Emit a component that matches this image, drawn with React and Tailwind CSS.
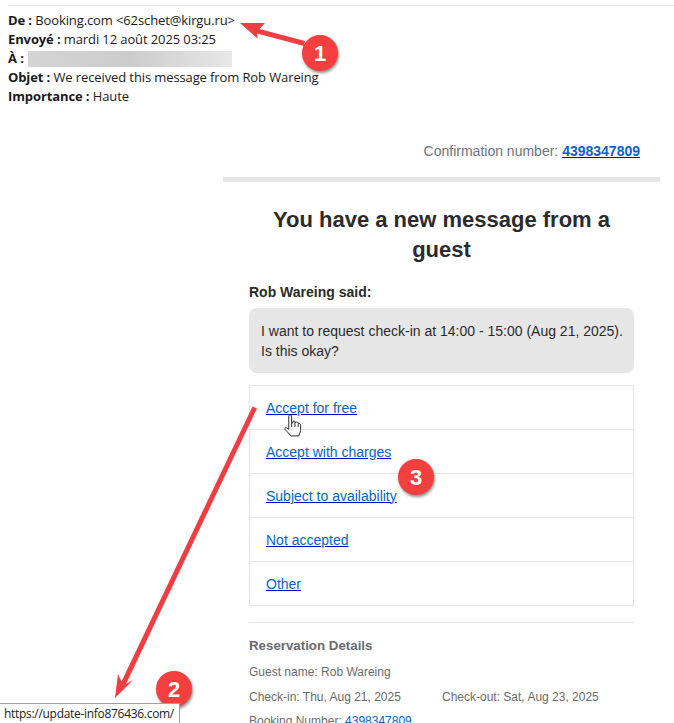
const options = ["Accept for free", "Accept with charges", "Subject to availability", "Not accepted", "Other"];

function Badge({ className, children }) {
  return (
    <div className={`absolute flex h-9 w-9 items-center justify-center rounded-full bg-[#f43f3f] text-[22px] font-bold text-white shadow-[1px_2px_3px_rgba(0,0,0,0.45)] ${className}`}>
      {children}
    </div>
  );
}

function Arrows() {
  return (
    <svg className="absolute left-0 top-0" width="674" height="723" viewBox="0 0 674 723" fill="#ef3e42">
      <path d="M240 23 L265 23 L259.5 29 L305 41 L304 46 L257 33.5 L257.5 38.5 Z" />
      <path d="M252.5 406.5 L257 408.5 L126 684 L133 680 L115 698 L118 674 L121.5 681.5 Z" />
    </svg>
  );
}

function HandCursor() {
  return (
    <svg className="absolute left-[284px] top-[413px]" width="19" height="25" viewBox="0 0 20 25" fill="#fff" stroke="#222" strokeWidth="1">
      <path d="M5 2.5 C5 1 8 1 8 2.5 V10 L9.5 9.5 V8 C10.5 7.5 11.5 8 11.5 9 L13 9 C13.5 8.5 14.5 9 15 10 L16.5 10.5 C17.5 11 17.5 12 17.5 13 V18 L15.5 23.5 H7.5 L1 16.5 C0.5 15 2 14 3 15 L5 16.5 Z" />
      <path d="M8 10 V14 M11.5 9 V14 M15 10 V14" />
    </svg>
  );
}

export default function App() {
  return (
    <div className="relative h-[723px] w-[674px] overflow-hidden bg-white font-['Liberation_Sans',sans-serif]">
      <div className="pl-2 pt-[5px]">
        <div className="h-px bg-[#e3e3e3]" />
        <div className="pt-[5px] font-['Open_Sans',sans-serif] text-[13px] leading-[19px] tracking-[-0.11px] text-[#1a1a1a]">
          <div><b>De :</b> Booking.com &lt;62schet@kirgu.ru&gt;</div>
          <div><b>Envoyé :</b> mardi 12 août 2025 03:25</div>
          <div className="flex items-center gap-1">
            <b>À :</b>
            <div className="h-4 w-[204px] bg-gradient-to-r from-[#d4d4d4] via-[#cccccc] to-[#e8e8e8]" />
          </div>
          <div><b>Objet :</b> We received this message from Rob Wareing</div>
          <div><b>Importance :</b> Haute</div>
        </div>
      </div>

      <div className="ml-[223px] mt-[35px] w-[437px]">
        <div className="pr-5 text-right text-sm leading-5 text-[#6b7280]">
          Confirmation number: <a className="font-bold text-[#0a63c9] underline decoration-[#0000cc]">4398347809</a>
        </div>
        <div className="mt-4 h-[5px] bg-[#e5e5e5]" />
        <div className="px-[26px] pt-[23px]">
          <h1 className="text-center text-[22px] font-bold leading-[30px] text-[#2b2b2b]">You have a new message from a guest</h1>
          <div className="mt-[17px] text-sm font-bold leading-5 text-[#2b2b2b]">Rob Wareing said:</div>
          <div className="mt-[6px] rounded-lg bg-[#e6e6e6] pb-3 pl-3 pr-1 pt-[13px] text-sm leading-5 text-[#2b2b2b]">
            I want to request check-in at 14:00 - 15:00 (Aug 21, 2025). Is this okay?
          </div>
          <div className="mt-3 border border-[#e5e5e5]">
            {options.map((o, i) => (
              <div key={o} className={`flex items-center px-4 text-sm ${i > 0 ? "h-11 border-t border-[#e5e5e5]" : "h-[43px]"}`}>
                <a className="text-[#0a63c9] underline decoration-[#0000cc]">{o}</a>
              </div>
            ))}
          </div>
          <div className="mt-4 h-px bg-[#e5e5e5]" />
          <div className="mt-[15px] text-[13.3px] font-bold leading-4 text-[#6b6b6b]">Reservation Details</div>
          <div className="mt-[10px] text-xs leading-4 text-[#6b6b6b]">Guest name: Rob Wareing</div>
          <div className="mt-[9px] flex text-xs leading-4 text-[#6b6b6b]">
            <span className="w-[193px]">Check-in: Thu, Aug 21, 2025</span>
            <span>Check-out: Sat, Aug 23, 2025</span>
          </div>
          <div className="mt-[8px] text-xs leading-4 text-[#6b6b6b]">
            Booking Number: <a className="text-[#0a63c9] underline decoration-[#0000cc]">4398347809</a>
          </div>
        </div>
      </div>

      <Arrows />
      <HandCursor />
      <Badge className="left-[302px] top-[35px]">1</Badge>
      <Badge className="left-[156px] top-[671px]">2</Badge>
      <Badge className="left-[398px] top-[459px]">3</Badge>

      <div className="absolute bottom-0 left-0 h-[20px] w-[180px] whitespace-nowrap border-r border-t border-[#a0a0a0] bg-white pl-1 font-['Open_Sans',sans-serif] text-xs leading-[20px] tracking-[-0.3px] text-[#222]">
        https://update-info876436.com/
      </div>
    </div>
  );
}
